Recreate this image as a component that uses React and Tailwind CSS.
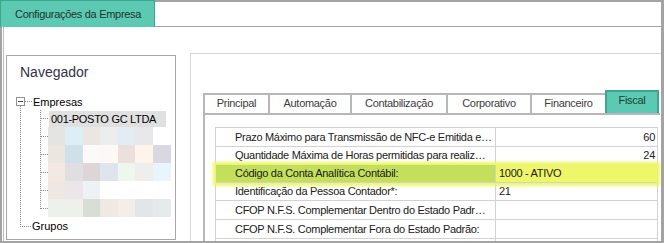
import React from "react";

const blockRows = [
  ["#e4e4e2", "#ddeef6", "#eae6e2", "#eceeed", "#e3ecf3", "#e8e7ea"],
  ["#ece6e0", "#cfe0e8", "#fbfaf8", "#fbf8f5", "#ebe0dc", "#fdf5ec", "#d8d8e2"],
  ["#f3e8e2", "#e0dde3", "#dcd6d6", "#dfe4ee", "#eef7ee", "#f0eeec", "#e8f5fb"],
  ["#f1e7e2", "#ece6ea", "#eff2f5"],
  ["#eef0ec", "#eef0ec", "#d8ddd6", "#f0e8e2", "#f3eee8", "#e3e5ea", "#e6eaea"],
];
const blockW = [17, 18, 17, 18, 17, 18, 18];

const tabs = [
  { label: "Principal", w: "w-[65px]" },
  { label: "Automação", w: "w-[82px]" },
  { label: "Contabilização", w: "w-[96px]" },
  { label: "Corporativo", w: "w-[84px]" },
  { label: "Financeiro", w: "w-[75px]" },
];

const rows = [
  { h: "h-[19px]", label: "Prazo Máximo para Transmissão de NFC-e Emitida e…", value: "60", right: true },
  { h: "h-[18px]", label: "Quantidade Máxima de Horas permitidas para realiz…", value: "24", right: true },
  { h: "h-[18px]", label: "Código da Conta Analítica Contábil:", value: "1000 - ATIVO", hl: true },
  { h: "h-[18px]", label: "Identificação da Pessoa Contador*:", value: "21" },
  { h: "h-[19px]", label: "CFOP N.F.S. Complementar Dentro do Estado Padr…", value: "" },
  { h: "h-[19px]", label: "CFOP N.F.S. Complementar Fora do Estado Padrão:", value: "" },
  { h: "h-[19px]", label: "", value: "" },
];

function TreeLines() {
  const branches = [25, 43, 61, 79, 97, 115];
  return (
    <svg className="absolute left-0 top-0 pointer-events-none" width="170" height="150">
      <g stroke="#8a8a8a" strokeWidth="1" strokeDasharray="1 1" shapeRendering="crispEdges">
        <line x1="13.5" y1="13" x2="13.5" y2="134" />
        <line x1="13" y1="133.5" x2="24" y2="133.5" />
        <line x1="18" y1="8.5" x2="25" y2="8.5" />
        <line x1="33.5" y1="17" x2="33.5" y2="116" />
        {branches.map((y) => (
          <line key={y} x1="34" y1={y + 0.5} x2="41" y2={y + 0.5} />
        ))}
      </g>
    </svg>
  );
}

export default function App() {
  return (
    <div className="w-[664px] h-[243px] bg-white flex flex-col overflow-hidden font-['Liberation_Sans',Arial,sans-serif]">
      {/* header */}
      <div className="flex h-[27px] shrink-0">
        <div className="w-[155px] bg-[#5ccab2] border border-b-0 border-[#3ba58e] flex items-center pl-[14px] text-[11px] tracking-[-0.3px] text-[#1d3530]">
          Configurações da Empresa
        </div>
        <div className="flex-1 border-t-2 border-b border-r-[3px] border-[#a3a3a3]" />
      </div>

      {/* body */}
      <div className="flex-1 min-h-0 flex border-l-2 border-r-[3px] border-b-2 border-[#a3a3a3] pl-px">
        <div className="flex-1 min-w-0 flex border-l border-[#bcbcbc]">
          {/* left navigator */}
          <div className="ml-[2px] mt-[28px] mb-px w-[170px] border border-[#a8a8a8] flex flex-col shrink-0">
            <div className="pt-[8px] pl-[13px] text-[14px] leading-[17px] text-[#333344]">Navegador</div>
            <div className="relative mt-[12px] flex flex-col text-[11px] text-black">
              <TreeLines />
              <div className="h-[17px] flex items-center">
                <div className="ml-[9px] w-[9px] h-[9px] border border-[#919191] bg-white flex items-center justify-center">
                  <div className="w-[5px] h-px bg-[#4a4a5a]" />
                </div>
                <span className="ml-[8px] leading-[14px]">Empresas</span>
              </div>
              <div className="h-[17px] flex items-center">
                <div className="ml-[42px] w-[117px] h-[16px] bg-[#e0e0e0] flex items-center pl-[2px] tracking-[-0.3px] leading-[14px]">
                  001-POSTO GC LTDA
                </div>
              </div>
              {blockRows.map((r, i) => (
                <div key={i} className="h-[18px] flex ml-[41px]">
                  {r.map((c, j) => (
                    <div key={j} className="h-full" style={{ width: blockW[j], background: c }} />
                  ))}
                </div>
              ))}
              <div className="h-[18px] flex items-center">
                <span className="ml-[25px] leading-[14px]">Grupos</span>
              </div>
            </div>
          </div>

          {/* right panel */}
          <div className="ml-[14px] mt-[26px] flex-1 min-w-0 border-t border-l border-[#d6d6d6] overflow-hidden flex flex-col pl-[12px]">
            <div className="pt-[36px] flex items-end h-[59px] shrink-0 text-[11px] tracking-[-0.3px] text-[#3c3c3c]">
              {tabs.map((t) => (
                <div
                  key={t.label}
                  className={`${t.w} h-[20px] border-t-2 border-l-2 border-[#b7b7b7] bg-white flex justify-center pt-px leading-[14px] shrink-0`}
                >
                  {t.label}
                </div>
              ))}
              <div className="w-[54px] h-[23px] border-2 border-b-0 border-[#3ea88f] bg-[#5ccab2] flex justify-center pt-px leading-[14px] shrink-0 text-[#1f3a34]">
                Fiscal
              </div>
            </div>
            <div className="flex-1 border-t-2 border-l-2 border-[#b7b7b7] pl-[10px] pt-[12px] w-[457px]">
              <div className="w-[443px] border-t border-l border-r border-[#d2d2d2] flex flex-col text-[11px] tracking-[-0.3px] text-[#202020]">
                {rows.map((r, i) => (
                  <div
                    key={i}
                    className={`${r.h} flex shrink-0 border-b border-[#d2d2d2] ${
                      r.hl ? "relative z-10 shadow-[0_0_3px_3px_#eef76e]" : ""
                    }`}
                  >
                    <div
                      className={`w-[280px] border-r border-[#d2d2d2] pl-[19px] flex items-center whitespace-nowrap overflow-hidden ${
                        r.hl ? "bg-[#c4df5c]" : ""
                      }`}
                    >
                      {r.label}
                    </div>
                    <div
                      className={`flex-1 flex items-center whitespace-nowrap ${
                        r.right ? "justify-end pr-[2px]" : "pl-[3px]"
                      } ${r.hl ? "bg-[#eef66a]" : ""}`}
                    >
                      {r.value}
                    </div>
                  </div>
                ))}
              </div>
            </div>
          </div>
        </div>
      </div>
    </div>
  );
}
